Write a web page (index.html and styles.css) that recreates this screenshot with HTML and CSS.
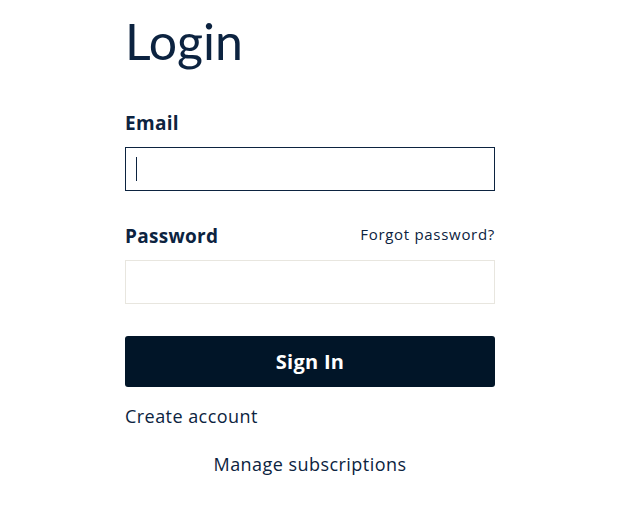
FILE: index.html
```html
<!DOCTYPE html>
<html lang="en">
<head>
<meta charset="utf-8">
<title>Login</title>
<link rel="stylesheet" href="styles.css">
</head>
<body>
<main class="login">
  <h1 class="title">Login</h1>
  <form class="form">
    <div class="field">
      <div class="label-row"><label class="label" for="email">Email</label></div>
      <div class="input input-focus" id="email"><span class="caret"></span></div>
    </div>
    <div class="field">
      <div class="label-row">
        <label class="label" for="password">Password</label>
        <a class="forgot" href="#">Forgot password?</a>
      </div>
      <div class="input" id="password"></div>
    </div>
    <button class="btn" type="button">Sign In</button>
    <a class="link create" href="#">Create account</a>
    <a class="link manage" href="#">Manage subscriptions</a>
  </form>
</main>
</body>
</html>
```
FILE: styles.css
```css
html, body {
  margin: 0;
  padding: 0;
  background: #ffffff;
}
body {
  font-family: "Open Sans", "Liberation Sans", sans-serif;
  color: #0c2340;
}
.login {
  width: 370px;
  margin-left: 125px;
  padding-top: 10px;
}
.title {
  font-family: Lato, "Open Sans", sans-serif;
  font-weight: 400;
  font-size: 50px;
  line-height: 62px;
  margin: 0;
  color: #0c2340;
}
.form {
  display: flex;
  flex-direction: column;
  margin-top: 38px;
}
.field {
  display: flex;
  flex-direction: column;
  margin-bottom: 32px;
}
.label-row {
  display: flex;
  justify-content: space-between;
  align-items: flex-start;
  margin-bottom: 11px;
}
.label {
  font-weight: 700;
  font-size: 19px;
  line-height: 26px;
  letter-spacing: 0.3px;
}
.forgot {
  font-size: 15px;
  line-height: 23px;
  color: #0c2340;
  text-decoration: none;
  letter-spacing: 0.7px;
}
.input {
  box-sizing: border-box;
  height: 44px;
  border: 1px solid #e8e6df;
  display: flex;
  align-items: center;
  padding-left: 10px;
}
.input-focus {
  border-color: #0c2340;
}
.caret {
  display: block;
  width: 1px;
  height: 24px;
  background: #0c2340;
}
.btn {
  height: 51px;
  border: 0;
  border-radius: 3px;
  background: #011528;
  color: #ffffff;
  font-family: "Open Sans", sans-serif;
  font-weight: 700;
  font-size: 20px;
  letter-spacing: 0.3px;
  margin-bottom: 17px;
}
.link {
  font-size: 18px;
  line-height: 24px;
  color: #0c2340;
  text-decoration: none;
  letter-spacing: 0.45px;
}
.manage {
  align-self: center;
  margin-top: 24px;
}
```
